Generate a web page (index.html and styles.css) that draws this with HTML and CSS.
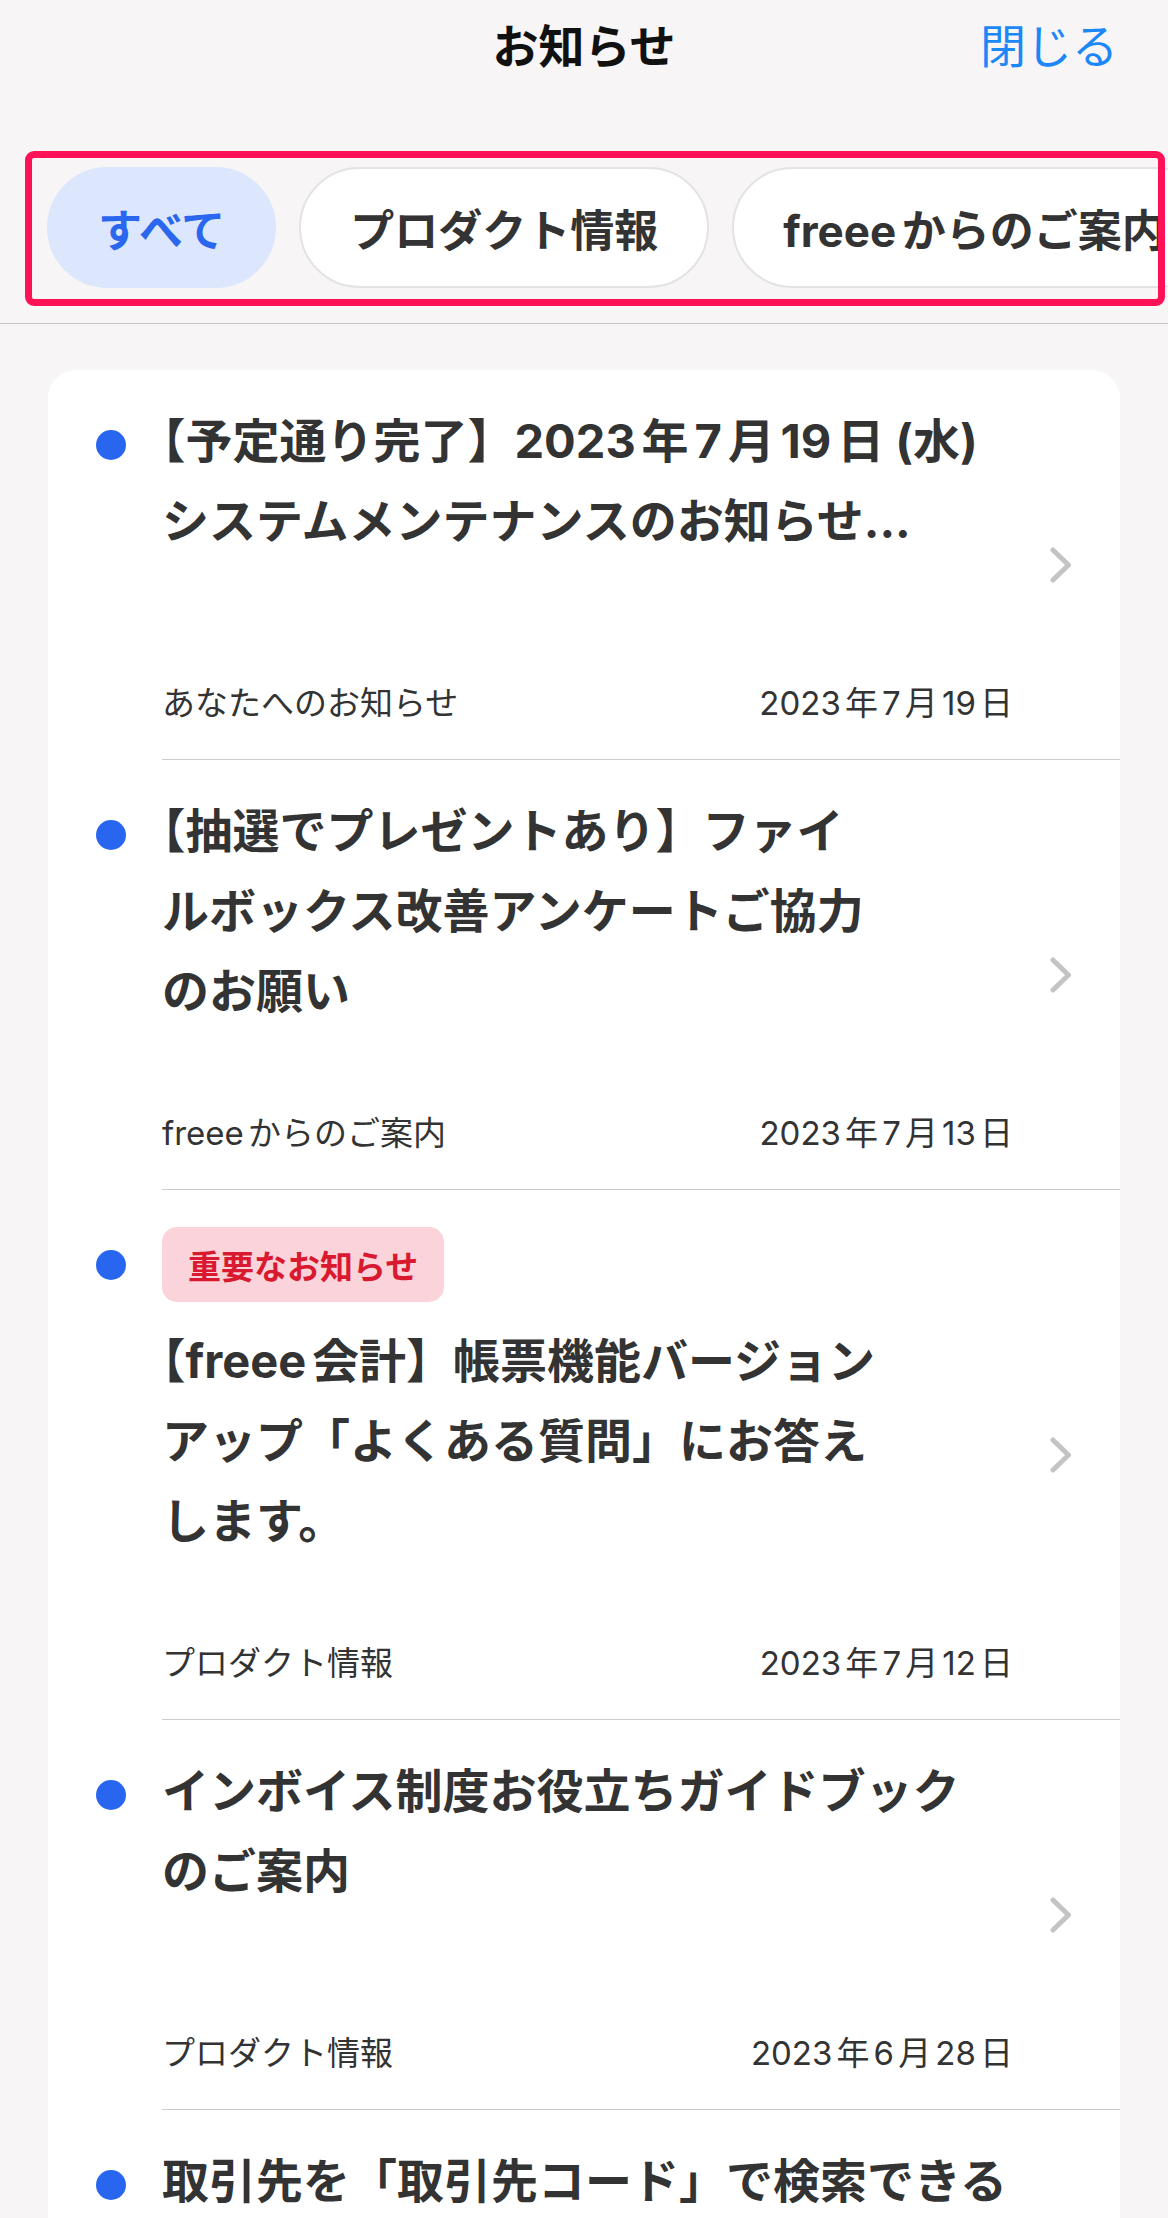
FILE: index.html
```html
<!DOCTYPE html>
<html lang="ja">
<head>
<meta charset="utf-8">
<title>お知らせ</title>
<link rel="stylesheet" href="styles.css">
</head>
<body>
<header class="header">
  <div></div>
  <h1 class="header-title">お知らせ</h1>
  <div class="header-close">閉じる</div>
</header>

<nav class="tabs">
  <div class="tab tab-active">すべて</div>
  <div class="tab">プロダクト情報</div>
  <div class="tab">freeeからのご案内</div>
  <div class="tab">あなたへのお知らせ</div>
</nav>
<div class="highlight"></div>

<main class="card">
  <div class="item">
    <div class="dot-col"><span class="dot"></span></div>
    <div class="main">
      <div class="content">
        <div class="title">【予定通り完了】2023年7月19日 (水)<br>システムメンテナンスのお知らせ...</div>
        <div class="meta"><span>あなたへのお知らせ</span><span>2023年7月19日</span></div>
      </div>
      <svg class="chev" viewBox="0 0 22 36" width="22" height="36"><path d="M3 3 L18.5 18 L3 33" /></svg>
    </div>
  </div>

  <div class="item">
    <div class="dot-col"><span class="dot"></span></div>
    <div class="main">
      <div class="content">
        <div class="title">【抽選でプレゼントあり】ファイ<br>ルボックス改善アンケートご協力<br>のお願い</div>
        <div class="meta"><span>freeeからのご案内</span><span>2023年7月13日</span></div>
      </div>
      <svg class="chev" viewBox="0 0 22 36" width="22" height="36"><path d="M3 3 L18.5 18 L3 33" /></svg>
    </div>
  </div>

  <div class="item">
    <div class="dot-col"><span class="dot"></span></div>
    <div class="main">
      <div class="content">
        <div class="badge">重要なお知らせ</div>
        <div class="title">【freee会計】帳票機能バージョン<br>アップ「よくある質問」にお答え<br>します。</div>
        <div class="meta"><span>プロダクト情報</span><span>2023年7月12日</span></div>
      </div>
      <svg class="chev" viewBox="0 0 22 36" width="22" height="36"><path d="M3 3 L18.5 18 L3 33" /></svg>
    </div>
  </div>

  <div class="item">
    <div class="dot-col"><span class="dot"></span></div>
    <div class="main">
      <div class="content">
        <div class="title">インボイス制度お役立ちガイドブック<br>のご案内</div>
        <div class="meta"><span>プロダクト情報</span><span>2023年6月28日</span></div>
      </div>
      <svg class="chev" viewBox="0 0 22 36" width="22" height="36"><path d="M3 3 L18.5 18 L3 33" /></svg>
    </div>
  </div>

  <div class="item">
    <div class="dot-col"><span class="dot"></span></div>
    <div class="main">
      <div class="content">
        <div class="title">取引先を「取引先コード」で検索できる</div>
      </div>
    </div>
  </div>
</main>
</body>
</html>
```
FILE: styles.css
```css
html, body {
  margin: 0;
  padding: 0;
}
body {
  position: relative;
  width: 1168px;
  min-height: 2218px;
  overflow: hidden;
  background: #f7f5f5;
  font-family: "Inter", "Noto Sans CJK JP", "Noto Sans", sans-serif;
  color: #333;
  text-autospace: normal;
}

.header {
  height: 92px;
  display: grid;
  grid-template-columns: 1fr auto 1fr;
  align-items: center;
}
.header-title {
  margin: 0;
  font-size: 46px;
  line-height: 92px;
  font-weight: 700;
  color: #111;
}
.header-close {
  justify-self: end;
  padding-right: 50px;
  font-size: 46px;
  line-height: 92px;
  color: #1c87f6;
}

.tabs {
  display: flex;
  gap: 23px;
  padding: 75px 0 35px 47px;
  overflow: hidden;
  border-bottom: 1px solid #c9c8c8;
}
.tab {
  flex-shrink: 0;
  box-sizing: border-box;
  height: 121px;
  display: flex;
  align-items: center;
  padding: 0 49px;
  border: 2px solid #e4e3e3;
  border-radius: 61px;
  background: #fff;
  font-size: 44px;
  font-weight: 700;
  color: #333;
  white-space: nowrap;
}
.tab-active {
  background: #dce7fd;
  border-color: #dce7fd;
  color: #2b67ee;
}

.highlight {
  position: absolute;
  left: 25px;
  top: 151px;
  width: 1140px;
  height: 155px;
  box-sizing: border-box;
  border: 7px solid #ff1158;
  border-radius: 9px;
  pointer-events: none;
}

.card {
  margin: 46px 48px 0;
  background: #fff;
  border-radius: 28px 28px 0 0;
}
.item {
  display: flex;
}
.dot-col {
  box-sizing: border-box;
  width: 114px;
  padding: 60px 0 0 48px;
  flex-shrink: 0;
}
.dot {
  display: block;
  width: 30px;
  height: 30px;
  border-radius: 50%;
  background: #2966f0;
}
.main {
  flex: 1;
  display: flex;
  align-items: center;
  border-bottom: 1px solid #cdcdcd;
}
.content {
  flex: 1;
  padding: 31px 0 34px;
}
.title {
  font-size: 47px;
  line-height: 80px;
  font-weight: 700;
  color: #333;
  min-height: 200px;
  white-space: nowrap;
  text-spacing-trim: trim-start;
}
.meta {
  display: flex;
  justify-content: space-between;
  margin-top: 80px;
  font-size: 33px;
  line-height: 44px;
  color: #333;
}
.badge {
  display: inline-flex;
  align-items: center;
  height: 75px;
  margin: 6px 0 19px;
  padding: 0 26px;
  border-radius: 15px;
  background: #fad4da;
  color: #d9192f;
  font-size: 33px;
  font-weight: 700;
}
.chev {
  flex-shrink: 0;
  margin: 0 48px 0 37px;
  fill: none;
  stroke: #c4c4c4;
  stroke-width: 5;
  stroke-linecap: round;
  stroke-linejoin: round;
}
```
